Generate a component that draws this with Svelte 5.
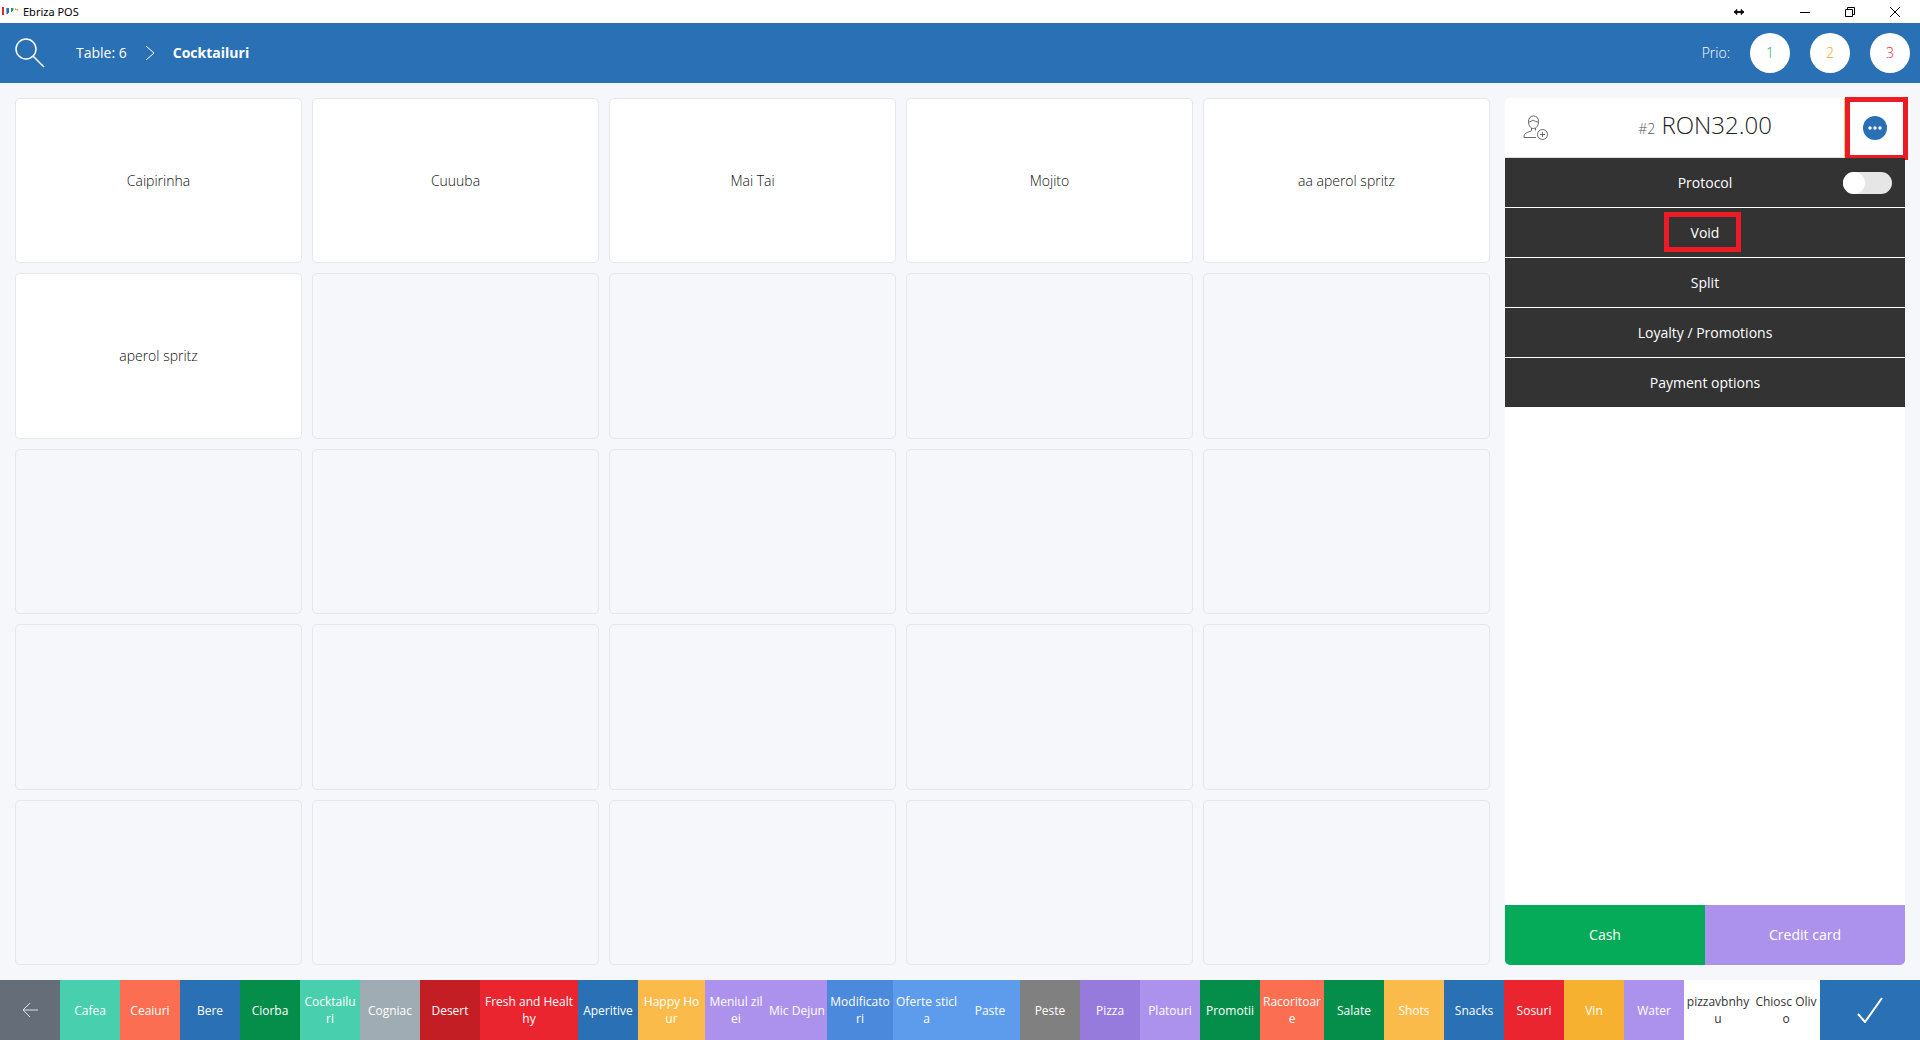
<script lang="ts">
	interface Category {
		name: string;
		color: string;
		size?: number;
		plain?: boolean;
	}

	const products = ['Caipirinha', 'Cuuuba', 'Mai Tai', 'Mojito', 'aa aperol spritz', 'aperol spritz'];
	const slots = Array.from({ length: 25 }, (_, i) => products[i] ?? null);

	const categories: Category[] = [
		{ name: 'Cafea', color: '#48cfad' },
		{ name: 'Ceaiuri', color: '#fc6e51' },
		{ name: 'Bere', color: '#2a70b5' },
		{ name: 'Ciorba', color: '#058e49' },
		{ name: 'Cocktailu\nri', color: '#48cfad' },
		{ name: 'Cogniac', color: '#a0acb3' },
		{ name: 'Desert', color: '#c41e25' },
		{ name: 'Fresh and Healthy', color: '#ea252f', size: 98 },
		{ name: 'Aperitive', color: '#2a70b5' },
		{ name: 'Happy Ho\nur', color: '#fabb4b', size: 67 },
		{ name: 'Meniul zilei', color: '#ac92ec', size: 62 },
		{ name: 'Mic Dejun', color: '#ac92ec' },
		{ name: 'Modificatori', color: '#4a89dc', size: 66 },
		{ name: 'Oferte sticla', color: '#5d9cec', size: 67 },
		{ name: 'Paste', color: '#5d9cec' },
		{ name: 'Peste', color: '#808080' },
		{ name: 'Pizza', color: '#967adc' },
		{ name: 'Platouri', color: '#ac92ec' },
		{ name: 'Promotii', color: '#058e49' },
		{ name: 'Racoritoare', color: '#fc6e51', size: 64 },
		{ name: 'Salate', color: '#058e49' },
		{ name: 'Shots', color: '#fabb4b' },
		{ name: 'Snacks', color: '#2a70b5' },
		{ name: 'Sosuri', color: '#ea252f' },
		{ name: 'Vin', color: '#f7b131' },
		{ name: 'Water', color: '#ac92ec' },
		{ name: 'pizzavbnhyu', color: '#ffffff', size: 68, plain: true },
		{ name: 'Chiosc Olivo', color: '#ffffff', size: 68, plain: true }
	];

	const actions = ['Void', 'Split', 'Loyalty / Promotions', 'Payment options'];

	let protocol = $state(false);
</script>

<div class="app">
	<div class="titlebar">
		<svg class="logo" width="16" height="10" viewBox="0 0 16 10" aria-hidden="true">
			<path d="M0 0h2v8H0z" fill="#ea252f" />
			<path d="M4 1h1v6H4z" fill="#7fa9d2" />
			<path d="M5 1h2v5H6v1H5z" fill="#2a70b5" />
			<path d="M9 1h2v3h-1v1H9z" fill="#05a556" />
			<path d="M11 1h1v2h-1z" fill="#9bd8b8" />
			<path d="M13 1h1v1h2v2h-1V3h-2z" fill="#f7b131" />
		</svg>
		<span class="app-name">Ebriza POS</span>
		<div class="window-buttons">
			<button class="win" aria-label="Resize">
				<svg width="12" height="8" viewBox="0 0 12 8"><path d="M1 4h10" stroke="#111" stroke-width="2" /><path d="M1 4l3-3v6zM11 4L8 1v6z" fill="#111" stroke="#111" stroke-width=".5" /></svg>
			</button>
			<button class="win wide" aria-label="Minimize">
				<svg width="12" height="12" viewBox="0 0 12 12"><path d="M1 6.500h10" stroke="#000" /></svg>
			</button>
			<button class="win" aria-label="Restore">
				<svg width="12" height="12" viewBox="0 0 12 12"><path d="M1.500 3.500h7v7h-7zM3.500 3.500v-2h7v7h-2" fill="none" stroke="#000" /></svg>
			</button>
			<button class="win" aria-label="Close">
				<svg width="12" height="12" viewBox="0 0 12 12"><path d="m1 1 10 10M11 1 1 11" stroke="#000" /></svg>
			</button>
		</div>
	</div>

	<header>
		<button class="search" aria-label="Search">
			<svg width="30" height="30" viewBox="0 0 30 30" fill="none" stroke="#fff" stroke-width="1.500">
				<circle cx="11" cy="11" r="10" />
				<path d="m18 18 11 11" />
			</svg>
		</button>
		<nav>
			<a href="#table">Table: 6</a>
			<svg width="10" height="16" viewBox="0 0 10 16" fill="none" stroke="#fff"><path d="m1 1 8 7-8 7" /></svg>
			<a class="current" href="#category">Cocktailuri</a>
		</nav>
		<div class="prio">
			<span>Prio:</span>
			<button class="low">1</button>
			<button class="mid">2</button>
			<button class="high">3</button>
		</div>
	</header>

	<main>
		<div class="products">
			{#each slots as product}
				{#if product}
					<button class="slot filled">{product}</button>
				{:else}
					<div class="slot"></div>
				{/if}
			{/each}
		</div>

		<section class="bill">
			<div class="bill-head">
				<button class="client" aria-label="Add client">
					<svg width="26" height="26" viewBox="0 0 26 26" fill="none" stroke="#666">
						<path d="M5.500 6.500C5.500 3 7.500 1 10.500 1s5 2 5 5.500c0 4-2 7-5 7s-5-3-5-7z" />
						<path d="M5.500 7c2-.2 3.500-1 4.500-2 1.500 1 3.500 2 5.500 2" />
						<path d="M8.500 13v2.500c-1 1.500-7 1.500-7.500 5.500v1.500h12M12.500 13v2.500" />
						<circle cx="19.500" cy="19.500" r="5" />
						<path d="M19.500 17v5M17 19.500h5" />
					</svg>
				</button>
				<div class="total"><span class="number">#2</span> RON32.00</div>
				<button class="more" aria-label="More options">
					<svg width="24" height="24" viewBox="0 0 24 24">
						<circle cx="12" cy="12" r="12" fill="#2a70b5" />
						<circle cx="7" cy="12" r="1.700" fill="#fff" />
						<circle cx="12" cy="12" r="1.700" fill="#fff" />
						<circle cx="17" cy="12" r="1.700" fill="#fff" />
					</svg>
				</button>
			</div>

			<div class="menu">
				<div class="item">
					<label for="protocol">Protocol</label>
					<input id="protocol" type="checkbox" bind:checked={protocol} />
				</div>
				{#each actions as action}
					<button class="item" class:marked={action === 'Void'}>{action}</button>
				{/each}
			</div>

			<div class="pay">
				<button class="cash">Cash</button>
				<button class="card">Credit card</button>
			</div>
		</section>
	</main>

	<footer>
		<button class="back" aria-label="Back">
			<svg width="16" height="14" viewBox="0 0 16 14" fill="none" stroke="#dfe1e4"><path d="M1 7h15M8 0 1 7l7 7" /></svg>
		</button>
		<div class="categories">
			{#each categories as { name, color, size = 60, plain = false }}
				<button class="category" class:plain style:background={color} style:flex-basis="{size}px">{name}</button>
			{/each}
		</div>
		<button class="confirm" aria-label="Confirm">
			<svg width="26" height="26" viewBox="0 0 26 26" fill="none" stroke="#fff" stroke-width="2"><path d="m1 17 7 8L25 1" /></svg>
		</button>
	</footer>
</div>

<style>
	:global(body) {
		margin: 0;
	}

	.app {
		display: flex;
		flex-direction: column;
		min-height: 100vh;
		background: #f5f7fb;
		font-family: 'Open Sans', 'Noto Sans', sans-serif;
		font-size: 14px;
		line-height: 20px;
		color: #333;
	}

	button {
		display: flex;
		align-items: center;
		justify-content: center;
		margin: 0;
		padding: 0;
		border: 0;
		background: none;
		font: inherit;
		color: inherit;
		cursor: pointer;
	}

	/* Title bar */
	.titlebar {
		display: flex;
		align-items: center;
		height: 23px;
		padding: 0 19px 0 2px;
		background: #fff;
	}

	.app-name {
		margin-left: 5px;
		font-family: 'Noto Sans', sans-serif;
		font-size: 11px;
		color: #000;
	}

	.window-buttons {
		display: flex;
		gap: 33px;
		height: 20px;
		margin-left: auto;
	}

	.win.wide {
		margin-left: 21px;
	}

	/* Header */
	header {
		display: flex;
		align-items: center;
		height: 60px;
		padding: 0 10px 0 15px;
		background: #2a70b5;
		color: #fff;
	}

	nav {
		display: flex;
		align-items: center;
		gap: 18px;
		margin-left: 31px;
	}

	nav a {
		color: #fff;
		text-decoration: none;
	}

	.current {
		font-weight: 700;
	}

	.prio {
		display: flex;
		align-items: center;
		gap: 20px;
		margin-left: auto;
		font-weight: 300;
	}

	.prio button {
		width: 40px;
		height: 40px;
		border-radius: 50%;
		background: #fff;
	}

	.prio .low {
		color: #05ab58;
	}

	.prio .mid {
		color: #f7a510;
	}

	.prio .high {
		color: #ea252f;
	}

	/* Products */
	main {
		flex: 1;
		display: flex;
		gap: 15px;
		padding: 15px;
	}

	.products {
		flex: 1;
		display: grid;
		grid-template-columns: repeat(5, 1fr);
		grid-template-rows: repeat(5, 1fr);
		gap: 10px;
	}

	.slot {
		border: 1px solid #e6e7ec;
		border-radius: 5px;
		font-weight: 300;
		color: #111;
	}

	.filled {
		background: #fff;
	}

	/* Bill */
	.bill {
		display: flex;
		flex-direction: column;
		width: 400px;
		border-radius: 5px;
		background: #fff;
	}

	.bill-head {
		display: flex;
		height: 59px;
		border-bottom: 1px solid #d5e3e0;
	}

	.client,
	.more {
		width: 61px;
	}

	.total {
		flex: 1;
		font-size: 24px;
		line-height: 54px;
		font-weight: 300;
		text-align: center;
		color: #222;
	}

	.number {
		font-size: 14px;
		color: #555;
	}

	.more {
		position: relative;
		border-left: 1px solid #f7c97a;
	}

	/* Highlight frames */
	.more::after,
	.marked::after {
		content: '';
		position: absolute;
		border: 5px solid #ed1c24;
	}

	.more::after {
		inset: -1px -3px -3px 0;
	}

	.menu {
		display: flex;
		flex-direction: column;
		gap: 1px;
		font-weight: 500;
	}

	.item {
		position: relative;
		display: flex;
		align-items: center;
		justify-content: center;
		height: 49px;
		background: #333;
		color: #fff;
	}

	.marked::after {
		inset: 4px 164px 5px 159px;
	}

	.item input {
		position: absolute;
		right: 13px;
		width: 49px;
		height: 22px;
		margin: 0;
		appearance: none;
		border-radius: 11px;
		background: #e6e6e6;
		cursor: pointer;
	}

	.item input::before {
		content: '';
		display: block;
		width: 22px;
		height: 22px;
		border-radius: 50%;
		background: #fff;
	}

	.item input:checked::before {
		margin-left: auto;
	}

	.pay {
		display: flex;
		height: 60px;
		margin-top: auto;
		border-radius: 0 0 5px 5px;
		overflow: hidden;
		color: #fff;
	}

	.pay button {
		flex: 1;
	}

	.cash {
		background: #05ab58;
	}

	.card {
		background: #ac92ec;
	}

	/* Categories */
	footer {
		display: flex;
		height: 60px;
	}

	.back {
		width: 60px;
		background: #656d78;
	}

	.categories {
		flex: 1;
		display: flex;
	}

	.category {
		flex-grow: 1;
		min-width: 0;
		padding: 0 2px;
		font-size: 12px;
		line-height: 17px;
		white-space: pre-line;
		word-break: break-all;
		color: #fff;
	}

	.plain {
		color: #333;
	}

	.confirm {
		width: 100px;
		background: #2a70b5;
	}
</style>
